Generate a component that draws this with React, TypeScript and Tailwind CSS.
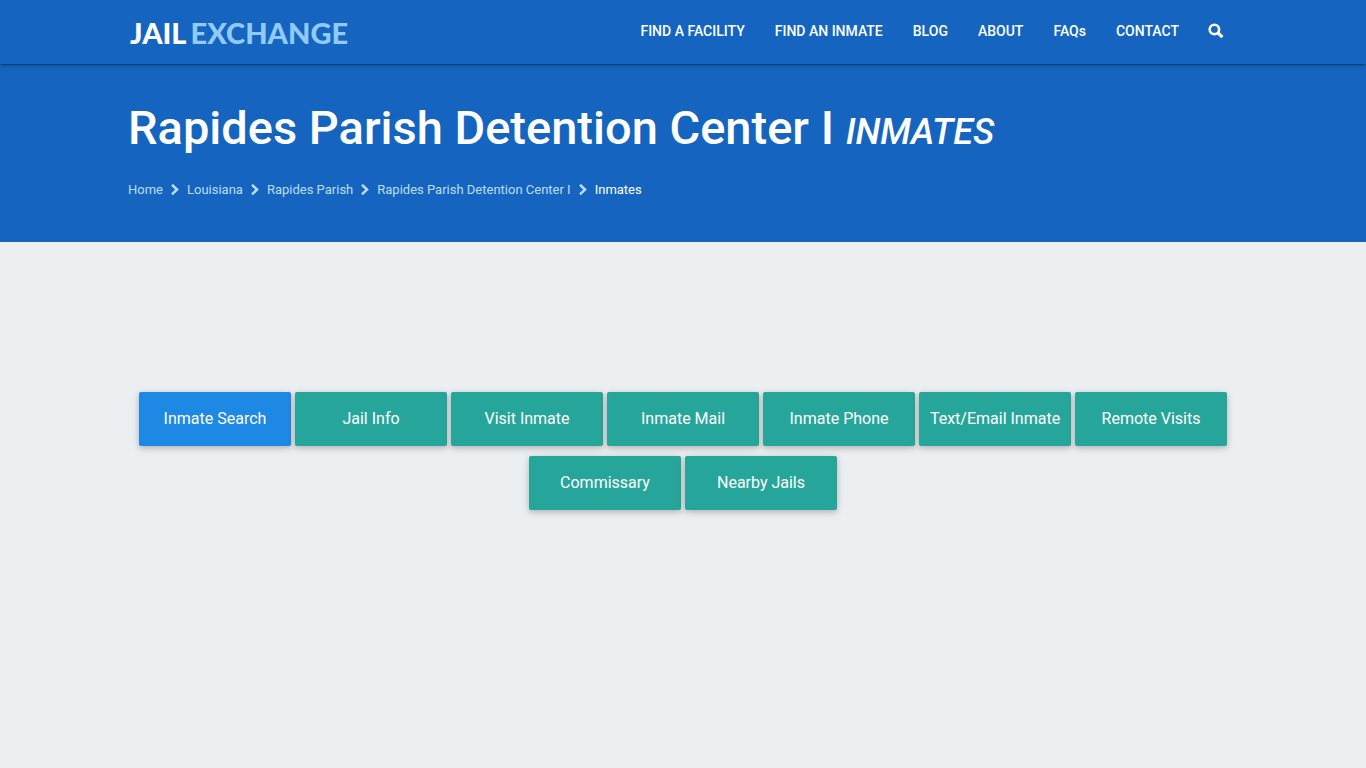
import { Fragment } from 'react';

const NAV_LINKS = ['FIND A FACILITY', 'FIND AN INMATE', 'BLOG', 'ABOUT', 'FAQs', 'CONTACT'];

const CRUMBS = ['Home', 'Louisiana', 'Rapides Parish', 'Rapides Parish Detention Center I'];

const SECTIONS = [
    'Inmate Search',
    'Jail Info',
    'Visit Inmate',
    'Inmate Mail',
    'Inmate Phone',
    'Text/Email Inmate',
    'Remote Visits',
    'Commissary',
    'Nearby Jails',
];

function SearchIcon() {
    return (
        <svg width="16" height="16" viewBox="0 0 16 16" fill="none" stroke="currentColor" aria-hidden="true">
            <circle cx="6.4" cy="6.4" r="4.7" strokeWidth="2.6" />
            <path d="M10.2 10.2 14.4 14.2" strokeWidth="3.2" />
        </svg>
    );
}

function Chevron() {
    return (
        <svg
            width="12"
            height="12"
            viewBox="0 0 12 12"
            fill="none"
            stroke="currentColor"
            strokeWidth="2.5"
            className="mx-1.5"
            aria-hidden="true"
        >
            <path d="M3 .8 8 5.6 3 10.4" />
        </svg>
    );
}

function Logo() {
    return (
        <a
            href="#"
            className="flex gap-1 pl-0.5 pt-0.5 font-[Lato,sans-serif] text-[29px] font-black leading-8 text-white"
        >
            <span>JAIL</span>
            <span className="text-[#90caf9]">EXCHANGE</span>
        </a>
    );
}

function NavBar() {
    return (
        <header className="relative bg-[#1565c0] shadow-[0_2px_2px_0_rgba(0,0,0,0.14),0_1px_5px_0_rgba(0,0,0,0.12),0_3px_1px_-2px_rgba(0,0,0,0.2)]">
            <div className="mx-auto flex h-16 max-w-[1110px] items-center justify-between">
                <Logo />
                <nav className="flex items-center pb-0.5 text-sm font-medium text-white">
                    {NAV_LINKS.map((label) => (
                        <a key={label} href="#" className="px-[15px]">
                            {label}
                        </a>
                    ))}
                    <button type="button" aria-label="Search" className="px-3.5">
                        <SearchIcon />
                    </button>
                </nav>
            </div>
        </header>
    );
}

function Breadcrumbs() {
    return (
        <nav aria-label="Breadcrumb" className="mt-6 flex items-center text-[13px] leading-5 text-[#bbdefb]">
            {CRUMBS.map((crumb) => (
                <Fragment key={crumb}>
                    <a href="#">{crumb}</a>
                    <Chevron />
                </Fragment>
            ))}
            <span className="text-white">Inmates</span>
        </nav>
    );
}

export default function App() {
    return (
        <div className="min-h-screen bg-[#eceff1] font-[Roboto,sans-serif]">
            <NavBar />
            <section className="bg-[#1565c0] pb-[42px] pt-9 text-white">
                <div className="mx-auto max-w-[1110px]">
                    <h1 className="text-[47px] font-medium leading-[56px]">
                        Rapides Parish Detention Center I <em className="text-4xl">INMATES</em>
                    </h1>
                    <Breadcrumbs />
                </div>
            </section>
            <main className="mx-auto mt-[150px] flex max-w-[1110px] flex-wrap justify-center gap-x-1 gap-y-2.5">
                {SECTIONS.map((label, i) => (
                    <a
                        key={label}
                        href="#"
                        className={`flex h-[54px] w-[152px] items-center justify-center rounded-xs text-base text-white shadow-[0_2px_5px_0_rgba(0,0,0,0.16),0_2px_10px_0_rgba(0,0,0,0.12)] ${
                            i === 0 ? 'bg-[#1e88e5]' : 'bg-[#26a69a]'
                        }`}
                    >
                        {label}
                    </a>
                ))}
            </main>
        </div>
    );
}
